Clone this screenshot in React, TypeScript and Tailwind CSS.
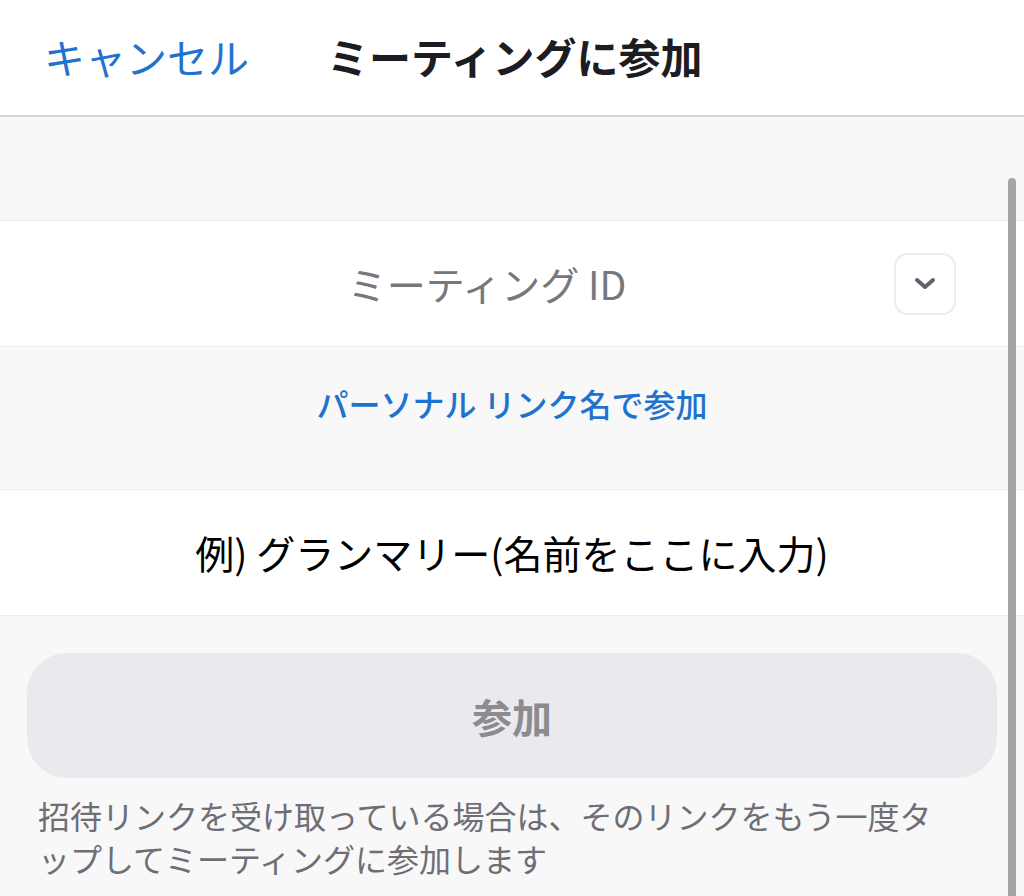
import React from "react";

export default function App() {
  const jp = { fontFamily: '"Noto Sans CJK JP", "Noto Sans", sans-serif' };
  return (
    <div className="w-[1024px] h-[896px] overflow-hidden bg-[#f8f8f9] relative" style={jp}>
      <header className="h-[117px] bg-white border-b-2 border-[#d6d6d8] flex items-center pl-[44px] pb-[3px]">
        <span className="text-[41px] text-[#1f73cf] leading-none">キャンセル</span>
        <span className="ml-[78px] text-[42px] font-bold text-[#1c1c22] leading-none">ミーティングに参加</span>
      </header>

      <div className="h-[103px]" />

      <div className="h-[127px] bg-white border-y border-[#ececee] flex items-center relative">
        <div className="flex-1 text-center text-[39px] text-[#77777d] leading-none pr-[50px]">ミーティング ID</div>
        <div className="absolute right-[68px] top-[32px] w-[62px] h-[62px] rounded-[14px] border-2 border-[#ebebf0] flex items-center justify-center">
          <svg width="26" height="16" viewBox="0 0 26 16" fill="none">
            <path d="M5 4 L13 11 L21 4" stroke="#63636f" strokeWidth="4" strokeLinecap="round" strokeLinejoin="round" />
          </svg>
        </div>
      </div>

      <div className="h-[142px] flex justify-center pt-[40px]">
        <span className="text-[32px] text-[#1f73cf] font-medium leading-none">パーソナル リンク名で参加</span>
      </div>

      <div className="h-[127px] bg-white border-y border-[#ececee] flex items-center justify-center">
        <span className="text-[39px] text-black leading-none">例) グランマリー(名前をここに入力)</span>
      </div>

      <div className="px-[27px] pt-[37px]">
        <button className="w-[970px] h-[125px] rounded-[40px] bg-[#e9e9ee] flex items-center justify-center">
          <span className="text-[40px] font-bold text-[#8b8b90] leading-none">参加</span>
        </button>
        <p className="mt-[16px] pl-[11px] w-[912px] text-[32px] leading-[43px] text-[#6e6e74]">
          招待リンクを受け取っている場合は、そのリンクをもう一度タップしてミーティングに参加します
        </p>
      </div>

      <div className="absolute right-[8px] top-[178px] w-[8px] h-[740px] rounded-full bg-[#a5a5a8]" />
    </div>
  );
}
